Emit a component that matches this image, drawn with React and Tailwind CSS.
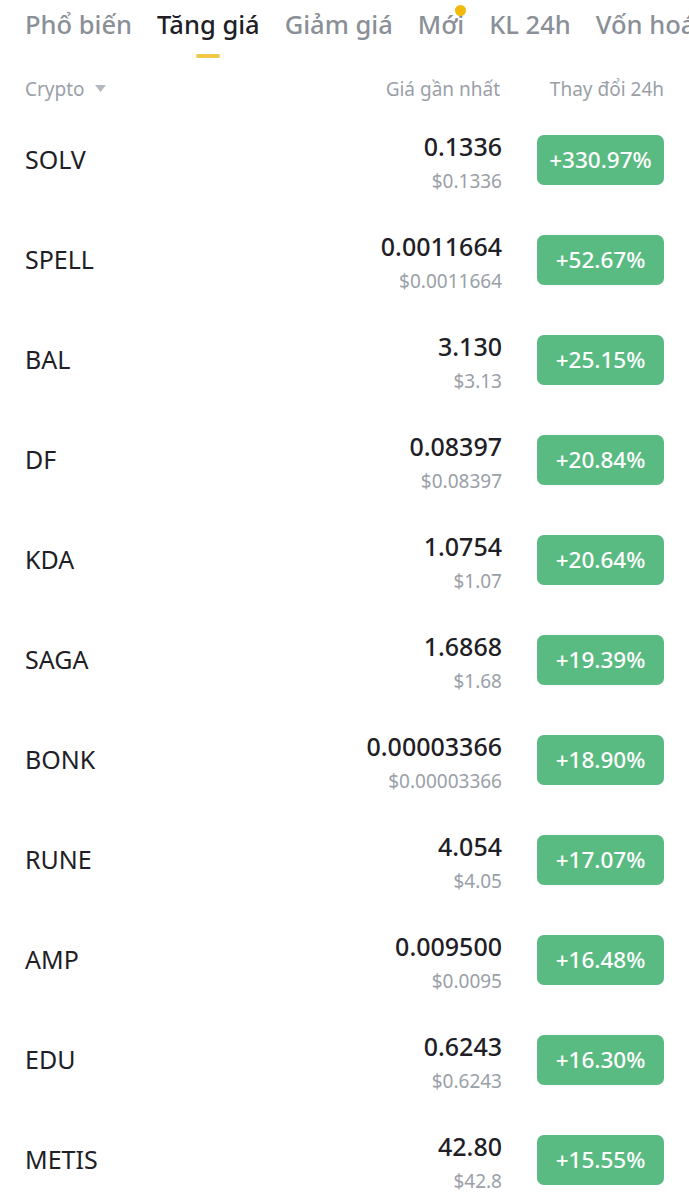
import React from "react";

const tabs = ["Phổ biến", "Tăng giá", "Giảm giá", "Mới", "KL 24h", "Vốn hoá"];

const rows = [
  { name: "SOLV", price: "0.1336", usd: "$0.1336", change: "+330.97%" },
  { name: "SPELL", price: "0.0011664", usd: "$0.0011664", change: "+52.67%" },
  { name: "BAL", price: "3.130", usd: "$3.13", change: "+25.15%" },
  { name: "DF", price: "0.08397", usd: "$0.08397", change: "+20.84%" },
  { name: "KDA", price: "1.0754", usd: "$1.07", change: "+20.64%" },
  { name: "SAGA", price: "1.6868", usd: "$1.68", change: "+19.39%" },
  { name: "BONK", price: "0.00003366", usd: "$0.00003366", change: "+18.90%" },
  { name: "RUNE", price: "4.054", usd: "$4.05", change: "+17.07%" },
  { name: "AMP", price: "0.009500", usd: "$0.0095", change: "+16.48%" },
  { name: "EDU", price: "0.6243", usd: "$0.6243", change: "+16.30%" },
  { name: "METIS", price: "42.80", usd: "$42.8", change: "+15.55%" },
];

export default function App() {
  return (
    <div
      className="w-[689px] h-[1199px] overflow-hidden bg-white"
      style={{ fontFamily: "'Noto Sans', Roboto, sans-serif" }}
    >
      {/* Tabs */}
      <div className="flex gap-[25px] pl-[25px] pt-[6px] h-[58px] whitespace-nowrap overflow-hidden">
        {tabs.map((t) => {
          const active = t === "Tăng giá";
          return (
            <div key={t} className="relative flex flex-col items-center">
              <span
                className={
                  active
                    ? "text-[25.5px] leading-[36px] font-medium text-[#1e2026]"
                    : "text-[25.5px] leading-[36px] font-medium text-[#8a8f98]"
                }
              >
                {t}
              </span>
              {active && (
                <div className="mt-[12px] w-[24px] h-[4px] rounded-full bg-[#f0c94a]" />
              )}
              {t === "Mới" && (
                <div className="absolute right-[-2px] top-[-1px] w-[11px] h-[11px] rounded-full bg-[#f0b90b]" />
              )}
            </div>
          );
        })}
      </div>

      {/* Header */}
      <div className="flex items-center px-[25px] h-[52px] pt-[10px] text-[19px] text-[#9aa0a8]">
        <div className="flex-1 flex items-center gap-[10px]">
          <span>Crypto</span>
          <svg width="11" height="8" viewBox="0 0 11 8">
            <path d="M0 0 H11 L5.5 7 Z" fill="#b4b9c0" />
          </svg>
        </div>
        <div className="text-right">Giá gần nhất</div>
        <div className="w-[164px] text-right">Thay đổi 24h</div>
      </div>

      {/* Rows */}
      <div>
        {rows.map((r) => (
          <div key={r.name} className="flex items-center px-[25px] h-[100px]">
            <div className="flex-1 text-[25px] text-[#1e2026]">{r.name}</div>
            <div className="flex flex-col items-end pt-[3px]">
              <span className="text-[25px] leading-[38px] font-medium text-[#1e2026]">
                {r.price}
              </span>
              <span className="text-[19px] leading-[32px] text-[#9aa0a8]">
                {r.usd}
              </span>
            </div>
            <div className="ml-[35px] w-[127px] h-[50px] rounded-[7px] bg-[#5abb82] flex items-center justify-center text-white text-[22.5px] font-medium">
              {r.change}
            </div>
          </div>
        ))}
      </div>
    </div>
  );
}
